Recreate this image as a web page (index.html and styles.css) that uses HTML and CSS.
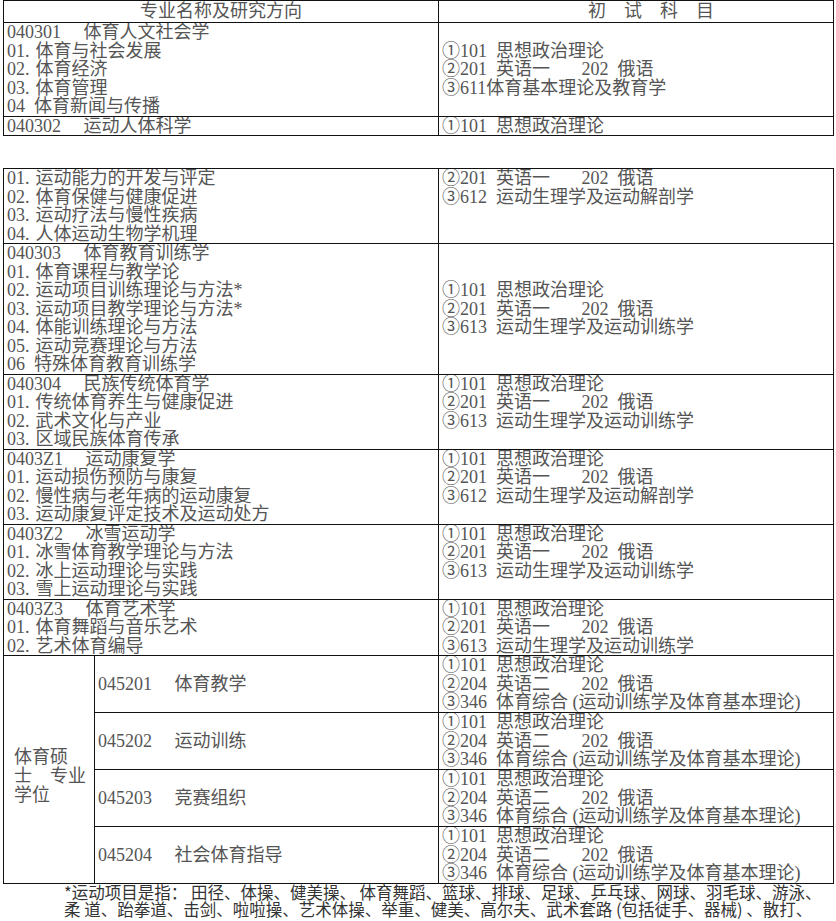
FILE: index.html
```html
<!DOCTYPE html>
<html lang="zh-CN">
<head>
<meta charset="utf-8">
<title>初试科目</title>
<link rel="stylesheet" href="styles.css">
</head>
<body>
<div class="page">
  <table class="t1">
    <colgroup><col class="c-left"><col class="c-right"></colgroup>
    <tr class="head">
      <td class="center">专业名称及研究方向</td>
      <td class="center subj-head">初　试　科　目</td>
    </tr>
    <tr>
      <td>040301&emsp; 体育人文社会学<br>01.&#8196;体育与社会发展<br>02.&#8196;体育经济<br>03.&#8196;体育管理<br>04&ensp;体育新闻与传播</td>
      <td class="mid">①101&ensp;思想政治理论<br>②201&ensp;英语一&emsp;&ensp; 202&ensp;俄语<br>③611体育基本理论及教育学</td>
    </tr>
    <tr>
      <td>040302&emsp; 运动人体科学</td>
      <td>①101&ensp;思想政治理论</td>
    </tr>
  </table>

  <table class="t2">
    <colgroup><col class="c-pro"><col class="c-pro2"><col class="c-right"></colgroup>
    <tr>
      <td colspan="2">01.&#8196;运动能力的开发与评定<br>02.&#8196;体育保健与健康促进<br>03.&#8196;运动疗法与慢性疾病<br>04.&#8196;人体运动生物学机理</td>
      <td>②201&ensp;英语一&emsp;&ensp; 202&ensp;俄语<br>③612&ensp;运动生理学及运动解剖学</td>
    </tr>
    <tr>
      <td colspan="2">040303&emsp; 体育教育训练学<br>01.&#8196;体育课程与教学论<br>02.&#8196;运动项目训练理论与方法*<br>03.&#8196;运动项目教学理论与方法*<br>04.&#8196;体能训练理论与方法<br>05.&#8196;运动竞赛理论与方法<br>06&ensp;特殊体育教育训练学</td>
      <td class="mid">①101&ensp;思想政治理论<br>②201&ensp;英语一&emsp;&ensp; 202&ensp;俄语<br>③613&ensp;运动生理学及运动训练学</td>
    </tr>
    <tr>
      <td colspan="2">040304&emsp; 民族传统体育学<br>01.&#8196;传统体育养生与健康促进<br>02.&#8196;武术文化与产业<br>03.&#8196;区域民族体育传承</td>
      <td>①101&ensp;思想政治理论<br>②201&ensp;英语一&emsp;&ensp; 202&ensp;俄语<br>③613&ensp;运动生理学及运动训练学</td>
    </tr>
    <tr>
      <td colspan="2">0403Z1&emsp; 运动康复学<br>01.&#8196;运动损伤预防与康复<br>02.&#8196;慢性病与老年病的运动康复<br>03.&#8196;运动康复评定技术及运动处方</td>
      <td>①101&ensp;思想政治理论<br>②201&ensp;英语一&emsp;&ensp; 202&ensp;俄语<br>③612&ensp;运动生理学及运动解剖学</td>
    </tr>
    <tr>
      <td colspan="2">0403Z2&emsp; 冰雪运动学<br>01.&#8196;冰雪体育教学理论与方法<br>02.&#8196;冰上运动理论与实践<br>03.&#8196;雪上运动理论与实践</td>
      <td>①101&ensp;思想政治理论<br>②201&ensp;英语一&emsp;&ensp; 202&ensp;俄语<br>③613&ensp;运动生理学及运动训练学</td>
    </tr>
    <tr>
      <td colspan="2">0403Z3&emsp; 体育艺术学<br>01.&#8196;体育舞蹈与音乐艺术<br>02.&#8196;艺术体育编导</td>
      <td>①101&ensp;思想政治理论<br>②201&ensp;英语一&emsp;&ensp; 202&ensp;俄语<br>③613&ensp;运动生理学及运动训练学</td>
    </tr>
    <tr class="pro">
      <td rowspan="4" class="mid degree">体育硕<br>士　专业<br>学位</td>
      <td class="mid">045201&emsp; 体育教学</td>
      <td>①101&ensp;思想政治理论<br>②204&ensp;英语二&emsp;&ensp; 202&ensp;俄语<br>③346&ensp;体育综合 (运动训练学及体育基本理论)</td>
    </tr>
    <tr class="pro">
      <td class="mid">045202&emsp; 运动训练</td>
      <td>①101&ensp;思想政治理论<br>②204&ensp;英语二&emsp;&ensp; 202&ensp;俄语<br>③346&ensp;体育综合 (运动训练学及体育基本理论)</td>
    </tr>
    <tr class="pro">
      <td class="mid">045203&emsp; 竞赛组织</td>
      <td>①101&ensp;思想政治理论<br>②204&ensp;英语二&emsp;&ensp; 202&ensp;俄语<br>③346&ensp;体育综合 (运动训练学及体育基本理论)</td>
    </tr>
    <tr class="pro">
      <td class="mid">045204&emsp; 社会体育指导</td>
      <td>①101&ensp;思想政治理论<br>②204&ensp;英语二&emsp;&ensp; 202&ensp;俄语<br>③346&ensp;体育综合 (运动训练学及体育基本理论)</td>
    </tr>
  </table>

  <div class="note">
    <div class="note-line">*运动项目是指： 田径、体操、健美操、 体育舞蹈、篮球、排球、足球、乒乓球、网球、羽毛球、游泳、</div>
    <div class="note-line">柔 道、跆拳道、击剑、啦啦操、艺术体操、举重、健美、高尔夫、武术套路 (包括徒手、器械) 、散打、</div>
  </div>
</div>
</body>
</html>
```

FILE: styles.css
```css
html, body {
  margin: 0;
  padding: 0;
  background: #ffffff;
}

body {
  width: 836px;
  height: 921px;
  overflow: hidden;
  font-family: "Liberation Serif", "Noto Sans CJK SC", serif;
  font-size: 18px;
  color: #555555;
}

.page {
  padding-left: 3px;
}

table {
  border-collapse: collapse;
  table-layout: fixed;
  width: 831px;
}

td {
  border: 1px solid #111111;
  padding: 0 0 0 3px;
  line-height: 18.5px;
  vertical-align: top;
  white-space: nowrap;
  overflow: hidden;
}

.c-left {
  width: 435px;
}

.c-pro {
  width: 91px;
}

.c-pro2 {
  width: 344px;
}

.head td {
  height: 21px;
  line-height: 21px;
  padding: 0;
}

.center {
  text-align: center;
}

.subj-head {
  padding-left: 30px !important;
}

.mid {
  vertical-align: middle;
}

.pro td {
  height: 56px;
}

.degree {
  padding-left: 10px;
  padding-top: 14px;
  line-height: 19px;
}

.t2 {
  margin-top: 32px;
}

.note {
  padding-left: 61px;
  font-family: "Noto Sans CJK SC", sans-serif;
  font-size: 16.5px;
  line-height: 17px;
  color: #333333;
  white-space: nowrap;
}

.note-line {
  white-space: nowrap;
}
```
